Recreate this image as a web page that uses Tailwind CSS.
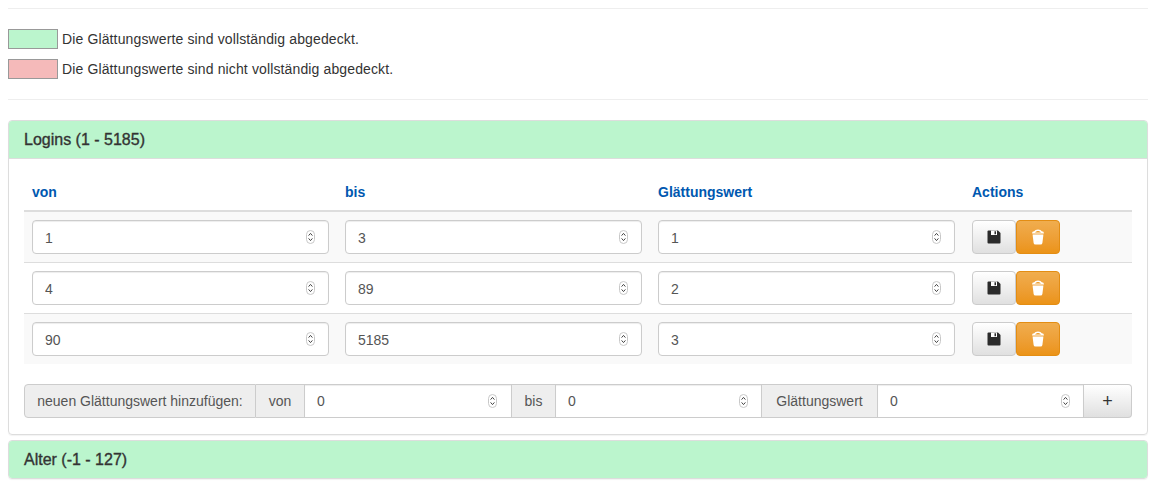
<!DOCTYPE html>
<html lang="de">
<head>
    <meta charset="UTF-8">
    <title>Glättungswerte</title>
    <script src="https://cdn.jsdelivr.net/npm/@tailwindcss/browser@4"></script>
</head>
<body class="bg-white px-2 font-['Liberation_Sans',Arial,sans-serif] text-[14px] leading-[20px] text-[#333] overflow-hidden h-[488px]">

    <hr class="mt-2 border-t border-[#eeeeee]">

    <!-- legend -->
    <div class="mt-5 flex flex-col gap-[10px]">
        <div class="flex items-center h-5 text-[14px] tracking-[0.13px]">
            <span class="w-[50px] h-5 border border-[#999] bg-[#bbf5cd] mr-1"></span>
            <span>Die Glättungswerte sind vollständig abgedeckt.</span>
        </div>
        <div class="flex items-center h-5 text-[14px] tracking-[0.13px]">
            <span class="w-[50px] h-5 border border-[#999] bg-[#f5baba] mr-1"></span>
            <span>Die Glättungswerte sind nicht vollständig abgedeckt.</span>
        </div>
    </div>

    <hr class="mt-5 border-t border-[#eeeeee]">

    <!-- panel Logins -->
    <div class="mt-5 rounded border border-[#dddddd] shadow-[0_1px_1px_rgba(0,0,0,0.05)]">
        <div class="h-[38px] px-[15px] flex items-center bg-[#bbf5cd] border-b border-[#dddddd] rounded-t-[3px] text-[16px] [-webkit-text-stroke:0.35px] text-[#333]">Logins (1 - 5185)</div>
        <div class="px-[15px] pt-[14px] pb-[16px]">
            <table class="w-full table-fixed border-collapse text-[14px]">
                <thead>
                    <tr class="text-left text-[#0058b0] text-[14px]">
                        <th class="w-[313px] px-2 pt-[9px] pb-[8px] border-b-2 border-[#dddddd]">von</th>
                        <th class="w-[313px] px-2 pt-[9px] pb-[8px] border-b-2 border-[#dddddd]">bis</th>
                        <th class="w-[313px] px-2 pt-[9px] pb-[8px] border-b-2 border-[#dddddd]">Glättungswert</th>
                        <th class="pl-[9px] pr-2 pt-[9px] pb-[8px] border-b-2 border-[#dddddd]">Actions</th>
                    </tr>
                </thead>
                <tbody>
                    <tr class="bg-[#f9f9f9]">
                        <td class="p-2">
                            <div class="relative"><input type="number" value="1" class="w-full h-[34px] px-3 pt-[2px] bg-white border border-[#cccccc] rounded-[4px] text-[14px] text-[#555] [appearance:textfield] shadow-[inset_0_1px_1px_rgba(0,0,0,0.075)]"><svg class="absolute right-[14px] top-[10px]" width="9" height="14" viewBox="0 0 9 14"><rect x="0.5" y="0.5" width="8" height="13" rx="4" fill="#fff" stroke="#c8c8c8"/><path d="M2.6 5.6L4.5 3.4L6.4 5.6M2.6 8.4L4.5 10.6L6.4 8.4" fill="none" stroke="#444" stroke-width="1"/></svg></div>
                        </td>
                        <td class="p-2">
                            <div class="relative"><input type="number" value="3" class="w-full h-[34px] px-3 pt-[2px] bg-white border border-[#cccccc] rounded-[4px] text-[14px] text-[#555] [appearance:textfield] shadow-[inset_0_1px_1px_rgba(0,0,0,0.075)]"><svg class="absolute right-[14px] top-[10px]" width="9" height="14" viewBox="0 0 9 14"><rect x="0.5" y="0.5" width="8" height="13" rx="4" fill="#fff" stroke="#c8c8c8"/><path d="M2.6 5.6L4.5 3.4L6.4 5.6M2.6 8.4L4.5 10.6L6.4 8.4" fill="none" stroke="#444" stroke-width="1"/></svg></div>
                        </td>
                        <td class="p-2">
                            <div class="relative"><input type="number" value="1" class="w-full h-[34px] px-3 pt-[2px] bg-white border border-[#cccccc] rounded-[4px] text-[14px] text-[#555] [appearance:textfield] shadow-[inset_0_1px_1px_rgba(0,0,0,0.075)]"><svg class="absolute right-[14px] top-[10px]" width="9" height="14" viewBox="0 0 9 14"><rect x="0.5" y="0.5" width="8" height="13" rx="4" fill="#fff" stroke="#c8c8c8"/><path d="M2.6 5.6L4.5 3.4L6.4 5.6M2.6 8.4L4.5 10.6L6.4 8.4" fill="none" stroke="#444" stroke-width="1"/></svg></div>
                        </td>
                        <td class="p-2 pl-[9px]">
                            <div class="flex">
                                <button class="w-11 h-[34px] flex items-center justify-center rounded-[4px] border border-[#cccccc] bg-gradient-to-b from-white to-[#e0e0e0]"><svg width="14" height="14" viewBox="0 0 14 14"><path fill="#2b2b2b" d="M1.5 0.5H11L13.5 3V12.5Q13.5 13.5 12.5 13.5H1.5Q0.5 13.5 0.5 12.5V1.5Q0.5 0.5 1.5 0.5Z"/><path fill="#fff" d="M4 0.5H10V5H4Z"/><path fill="#2b2b2b" d="M7.5 1.2H9V4.2H7.5Z"/></svg></button>
                                <button class="w-11 h-[34px] flex items-center justify-center rounded-[4px] border border-[#e38d13] bg-gradient-to-b from-[#f0ad4e] to-[#eb9316]"><svg width="14" height="16" viewBox="0 0 14 16"><path fill="#fff" d="M1 4.5Q1 2.2 3.2 2.2Q4 0.5 7 0.5Q10 0.5 10.8 2.2Q13 2.2 13 4.5Z"/><path fill="#eb9316" d="M4 3.4Q5 1.9 7 1.9Q9 1.9 10 3.4Z"/><path fill="#fff" d="M1.6 5.5H12.4L11.4 14Q11.2 15.5 9.5 15.5H4.5Q2.8 15.5 2.6 14Z"/></svg></button>
                            </div>
                        </td>
                    </tr>
                    <tr class="border-t border-[#dddddd]">
                        <td class="p-2">
                            <div class="relative"><input type="number" value="4" class="w-full h-[34px] px-3 pt-[2px] bg-white border border-[#cccccc] rounded-[4px] text-[14px] text-[#555] [appearance:textfield] shadow-[inset_0_1px_1px_rgba(0,0,0,0.075)]"><svg class="absolute right-[14px] top-[10px]" width="9" height="14" viewBox="0 0 9 14"><rect x="0.5" y="0.5" width="8" height="13" rx="4" fill="#fff" stroke="#c8c8c8"/><path d="M2.6 5.6L4.5 3.4L6.4 5.6M2.6 8.4L4.5 10.6L6.4 8.4" fill="none" stroke="#444" stroke-width="1"/></svg></div>
                        </td>
                        <td class="p-2">
                            <div class="relative"><input type="number" value="89" class="w-full h-[34px] px-3 pt-[2px] bg-white border border-[#cccccc] rounded-[4px] text-[14px] text-[#555] [appearance:textfield] shadow-[inset_0_1px_1px_rgba(0,0,0,0.075)]"><svg class="absolute right-[14px] top-[10px]" width="9" height="14" viewBox="0 0 9 14"><rect x="0.5" y="0.5" width="8" height="13" rx="4" fill="#fff" stroke="#c8c8c8"/><path d="M2.6 5.6L4.5 3.4L6.4 5.6M2.6 8.4L4.5 10.6L6.4 8.4" fill="none" stroke="#444" stroke-width="1"/></svg></div>
                        </td>
                        <td class="p-2">
                            <div class="relative"><input type="number" value="2" class="w-full h-[34px] px-3 pt-[2px] bg-white border border-[#cccccc] rounded-[4px] text-[14px] text-[#555] [appearance:textfield] shadow-[inset_0_1px_1px_rgba(0,0,0,0.075)]"><svg class="absolute right-[14px] top-[10px]" width="9" height="14" viewBox="0 0 9 14"><rect x="0.5" y="0.5" width="8" height="13" rx="4" fill="#fff" stroke="#c8c8c8"/><path d="M2.6 5.6L4.5 3.4L6.4 5.6M2.6 8.4L4.5 10.6L6.4 8.4" fill="none" stroke="#444" stroke-width="1"/></svg></div>
                        </td>
                        <td class="p-2 pl-[9px]">
                            <div class="flex">
                                <button class="w-11 h-[34px] flex items-center justify-center rounded-[4px] border border-[#cccccc] bg-gradient-to-b from-white to-[#e0e0e0]"><svg width="14" height="14" viewBox="0 0 14 14"><path fill="#2b2b2b" d="M1.5 0.5H11L13.5 3V12.5Q13.5 13.5 12.5 13.5H1.5Q0.5 13.5 0.5 12.5V1.5Q0.5 0.5 1.5 0.5Z"/><path fill="#fff" d="M4 0.5H10V5H4Z"/><path fill="#2b2b2b" d="M7.5 1.2H9V4.2H7.5Z"/></svg></button>
                                <button class="w-11 h-[34px] flex items-center justify-center rounded-[4px] border border-[#e38d13] bg-gradient-to-b from-[#f0ad4e] to-[#eb9316]"><svg width="14" height="16" viewBox="0 0 14 16"><path fill="#fff" d="M1 4.5Q1 2.2 3.2 2.2Q4 0.5 7 0.5Q10 0.5 10.8 2.2Q13 2.2 13 4.5Z"/><path fill="#eb9316" d="M4 3.4Q5 1.9 7 1.9Q9 1.9 10 3.4Z"/><path fill="#fff" d="M1.6 5.5H12.4L11.4 14Q11.2 15.5 9.5 15.5H4.5Q2.8 15.5 2.6 14Z"/></svg></button>
                            </div>
                        </td>
                    </tr>
                    <tr class="bg-[#f9f9f9] border-t border-[#dddddd]">
                        <td class="p-2">
                            <div class="relative"><input type="number" value="90" class="w-full h-[34px] px-3 pt-[2px] bg-white border border-[#cccccc] rounded-[4px] text-[14px] text-[#555] [appearance:textfield] shadow-[inset_0_1px_1px_rgba(0,0,0,0.075)]"><svg class="absolute right-[14px] top-[10px]" width="9" height="14" viewBox="0 0 9 14"><rect x="0.5" y="0.5" width="8" height="13" rx="4" fill="#fff" stroke="#c8c8c8"/><path d="M2.6 5.6L4.5 3.4L6.4 5.6M2.6 8.4L4.5 10.6L6.4 8.4" fill="none" stroke="#444" stroke-width="1"/></svg></div>
                        </td>
                        <td class="p-2">
                            <div class="relative"><input type="number" value="5185" class="w-full h-[34px] px-3 pt-[2px] bg-white border border-[#cccccc] rounded-[4px] text-[14px] text-[#555] [appearance:textfield] shadow-[inset_0_1px_1px_rgba(0,0,0,0.075)]"><svg class="absolute right-[14px] top-[10px]" width="9" height="14" viewBox="0 0 9 14"><rect x="0.5" y="0.5" width="8" height="13" rx="4" fill="#fff" stroke="#c8c8c8"/><path d="M2.6 5.6L4.5 3.4L6.4 5.6M2.6 8.4L4.5 10.6L6.4 8.4" fill="none" stroke="#444" stroke-width="1"/></svg></div>
                        </td>
                        <td class="p-2">
                            <div class="relative"><input type="number" value="3" class="w-full h-[34px] px-3 pt-[2px] bg-white border border-[#cccccc] rounded-[4px] text-[14px] text-[#555] [appearance:textfield] shadow-[inset_0_1px_1px_rgba(0,0,0,0.075)]"><svg class="absolute right-[14px] top-[10px]" width="9" height="14" viewBox="0 0 9 14"><rect x="0.5" y="0.5" width="8" height="13" rx="4" fill="#fff" stroke="#c8c8c8"/><path d="M2.6 5.6L4.5 3.4L6.4 5.6M2.6 8.4L4.5 10.6L6.4 8.4" fill="none" stroke="#444" stroke-width="1"/></svg></div>
                        </td>
                        <td class="p-2 pl-[9px]">
                            <div class="flex">
                                <button class="w-11 h-[34px] flex items-center justify-center rounded-[4px] border border-[#cccccc] bg-gradient-to-b from-white to-[#e0e0e0]"><svg width="14" height="14" viewBox="0 0 14 14"><path fill="#2b2b2b" d="M1.5 0.5H11L13.5 3V12.5Q13.5 13.5 12.5 13.5H1.5Q0.5 13.5 0.5 12.5V1.5Q0.5 0.5 1.5 0.5Z"/><path fill="#fff" d="M4 0.5H10V5H4Z"/><path fill="#2b2b2b" d="M7.5 1.2H9V4.2H7.5Z"/></svg></button>
                                <button class="w-11 h-[34px] flex items-center justify-center rounded-[4px] border border-[#e38d13] bg-gradient-to-b from-[#f0ad4e] to-[#eb9316]"><svg width="14" height="16" viewBox="0 0 14 16"><path fill="#fff" d="M1 4.5Q1 2.2 3.2 2.2Q4 0.5 7 0.5Q10 0.5 10.8 2.2Q13 2.2 13 4.5Z"/><path fill="#eb9316" d="M4 3.4Q5 1.9 7 1.9Q9 1.9 10 3.4Z"/><path fill="#fff" d="M1.6 5.5H12.4L11.4 14Q11.2 15.5 9.5 15.5H4.5Q2.8 15.5 2.6 14Z"/></svg></button>
                            </div>
                        </td>
                    </tr>
                </tbody>
            </table>

            <!-- add row -->
            <div class="mt-5 flex h-[34px] text-[14px] text-[#555]">
                <span class="w-[232px] flex items-center justify-center bg-[#eeeeee] border border-[#cccccc] rounded-l-[4px]">neuen Glättungswert hinzufügen:</span>
                <span class="w-[49px] flex items-center justify-center bg-[#eeeeee] border border-l-0 border-[#cccccc]">von</span>
                <div class="relative w-[206px]"><input type="number" value="0" class="w-full h-[34px] px-3 bg-white border border-x-0 border-[#cccccc] text-[14px] text-[#555] [appearance:textfield] shadow-[inset_0_1px_1px_rgba(0,0,0,0.075)]"><svg class="absolute right-[14px] top-[10px]" width="9" height="14" viewBox="0 0 9 14"><rect x="0.5" y="0.5" width="8" height="13" rx="4" fill="#fff" stroke="#c8c8c8"/><path d="M2.6 5.6L4.5 3.4L6.4 5.6M2.6 8.4L4.5 10.6L6.4 8.4" fill="none" stroke="#444" stroke-width="1"/></svg></div>
                <span class="w-[45px] flex items-center justify-center bg-[#eeeeee] border border-[#cccccc]">bis</span>
                <div class="relative w-[206px]"><input type="number" value="0" class="w-full h-[34px] px-3 bg-white border border-l-0 border-[#cccccc] text-[14px] text-[#555] [appearance:textfield] shadow-[inset_0_1px_1px_rgba(0,0,0,0.075)]"><svg class="absolute right-[14px] top-[10px]" width="9" height="14" viewBox="0 0 9 14"><rect x="0.5" y="0.5" width="8" height="13" rx="4" fill="#fff" stroke="#c8c8c8"/><path d="M2.6 5.6L4.5 3.4L6.4 5.6M2.6 8.4L4.5 10.6L6.4 8.4" fill="none" stroke="#444" stroke-width="1"/></svg></div>
                <span class="w-[116px] flex items-center justify-center bg-[#eeeeee] border border-l-0 border-[#cccccc]">Glättungswert</span>
                <div class="relative w-[206px]"><input type="number" value="0" class="w-full h-[34px] px-3 bg-white border border-l-0 border-[#cccccc] text-[14px] text-[#555] [appearance:textfield] shadow-[inset_0_1px_1px_rgba(0,0,0,0.075)]"><svg class="absolute right-[14px] top-[10px]" width="9" height="14" viewBox="0 0 9 14"><rect x="0.5" y="0.5" width="8" height="13" rx="4" fill="#fff" stroke="#c8c8c8"/><path d="M2.6 5.6L4.5 3.4L6.4 5.6M2.6 8.4L4.5 10.6L6.4 8.4" fill="none" stroke="#444" stroke-width="1"/></svg></div>
                <button class="flex-1 flex items-center justify-center border border-l-0 border-[#cccccc] rounded-r-[4px] bg-gradient-to-b from-white to-[#e0e0e0] text-[18px] text-[#333]">+</button>
            </div>
        </div>
    </div>

    <!-- panel Alter -->
    <div class="mt-[5px] rounded border border-[#dddddd] shadow-[0_1px_1px_rgba(0,0,0,0.05)]">
        <div class="h-[37px] pt-px px-[15px] flex items-center bg-[#bbf5cd] rounded-[3px] text-[16px] [-webkit-text-stroke:0.35px] text-[#333]">Alter (-1 - 127)</div>
    </div>

</body>
</html>
